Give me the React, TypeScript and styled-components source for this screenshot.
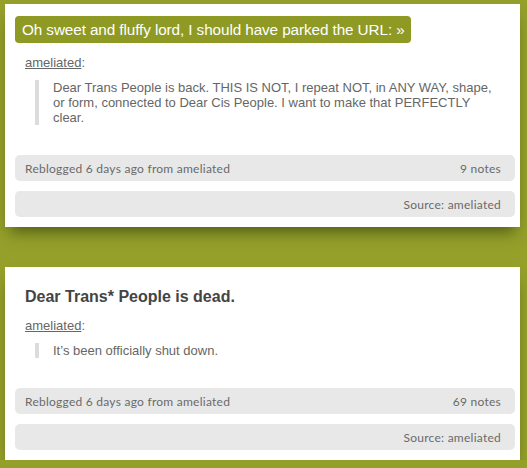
import React from "react";
import styled, { createGlobalStyle } from "styled-components";

const GlobalStyle = createGlobalStyle`
  html, body {
    margin: 0;
    padding: 0;
    background: #94a02a;
  }
  body {
    font-family: "Liberation Sans", Arial, sans-serif;
  }
`;

type Post = {
  title: string;
  isLinkTitle?: boolean;
  from: string;
  quote: string;
  notes: number;
};

const posts: Post[] = [
  {
    title: "Oh sweet and fluffy lord, I should have parked the URL: \u00bb",
    isLinkTitle: true,
    from: "ameliated",
    quote:
      "Dear Trans People is back. THIS IS NOT, I repeat NOT, in ANY WAY, shape, or form, connected to Dear Cis People. I want to make that PERFECTLY clear.",
    notes: 9,
  },
  {
    title: "Dear Trans* People is dead.",
    from: "ameliated",
    quote: "It\u2019s been officially shut down.",
    notes: 69,
  },
];

const App: React.FC = () => {
  return (
    <Page>
      <GlobalStyle />
      {posts.map((post) => (
        <Card key={post.title}>
          {post.isLinkTitle ? (
            <LinkTitle href="#">{post.title}</LinkTitle>
          ) : (
            <Title>{post.title}</Title>
          )}
          <Body>
            <Attribution>
              <a href="#">{post.from}</a>:
            </Attribution>
            <Quote>{post.quote}</Quote>
          </Body>
          <Meta>
            <span>Reblogged 6 days ago from {post.from}</span>
            <span>{post.notes} notes</span>
          </Meta>
          <Meta $alignEnd>
            <span>Source: {post.from}</span>
          </Meta>
        </Card>
      ))}
    </Page>
  );
};

const Page = styled.main`
  padding-top: 4px;
  display: flex;
  flex-direction: column;
  gap: 40px;
`;

const Card = styled.article`
  margin: 0 7px 0 5px;
  padding: 12px 5px 10px 10px;
  background: #fff;
  box-shadow: 0 10px 14px -5px rgba(30, 35, 0, 0.55);
  display: flex;
  flex-direction: column;
`;

const LinkTitle = styled.a`
  align-self: flex-start;
  padding: 4px 6px 4px 7px;
  border-radius: 4px;
  background: #8e9a23;
  color: #fff;
  font-size: 15.3px;
  line-height: 19px;
  letter-spacing: -0.1px;
  text-decoration: none;
`;

const Title = styled.h2`
  margin: 8px 0 0 10px;
  font-size: 16px;
  line-height: 19px;
  font-weight: bold;
  color: #444;
`;

const Body = styled.div`
  padding: 12px 15px 30px 10px;
  font-size: 13px;
  color: #666;
`;

const Attribution = styled.p`
  margin: 0;
  line-height: 16px;

  a {
    color: #666;
    text-decoration: underline;
  }
`;

const Quote = styled.blockquote`
  margin: 9px 0 0 10px;
  padding-left: 14px;
  border-left: 4px solid #dcdcdc;
  line-height: 15px;
`;

const Meta = styled.div<{ $alignEnd?: boolean }>`
  display: flex;
  justify-content: ${(p) => (p.$alignEnd ? "flex-end" : "space-between")};
  align-items: center;
  height: 26px;
  padding: 0 14px 0 10px;
  border-radius: 5px;
  background: #e8e8e8;
  color: #6a6a6a;
  font-family: Lato, "Liberation Sans", sans-serif;
  font-size: 12px;
  letter-spacing: 0.25px;

  & + & {
    margin-top: 10px;
  }
`;

export default App;
